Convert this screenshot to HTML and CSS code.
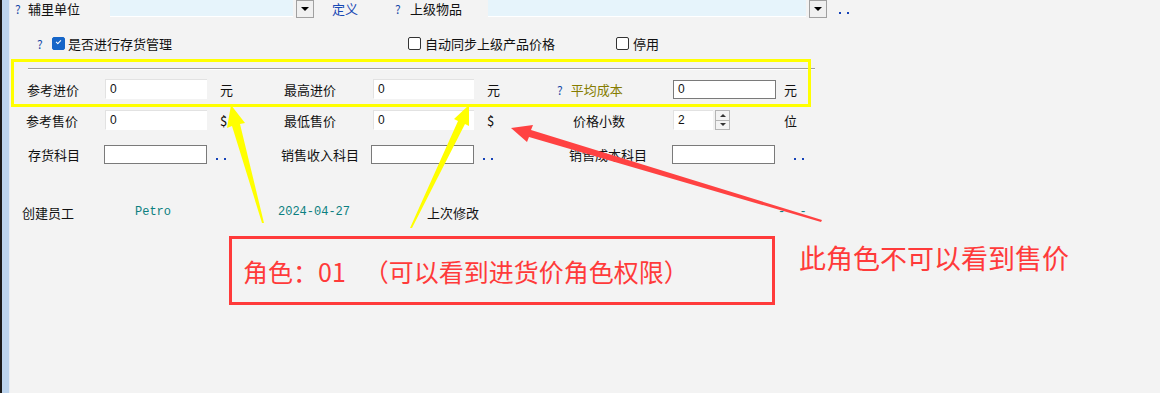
FILE: index.html
```html
<!DOCTYPE html>
<html lang="zh-CN">
<head>
  <meta charset="UTF-8">
  <title>物品资料</title>
  <link rel="stylesheet" href="styles.css">
</head>
<body>
  <div class="edge"></div>
  <div class="main">
    <div class="top-row">
      <span class="q w13 ml5">?</span>
      <span class="lbl w82">辅里单位</span>
      <span class="combo w183"></span>
      <span class="drop"></span>
      <span class="link ml18 w63">定义</span>
      <span class="q w15">?</span>
      <span class="lbl w78">上级物品</span>
      <span class="combo w318"></span>
      <span class="drop"></span>
      <span class="dots ml12"></span>
    </div>

    <div class="check-row">
      <span class="q w15 ml27">?</span>
      <span class="box on"></span>
      <span class="lbl w340">是否进行存货管理</span>
      <span class="box"></span>
      <span class="lbl w191">自动同步上级产品价格</span>
      <span class="box"></span>
      <span class="lbl">停用</span>
    </div>

    <div class="sep"></div>

    <div class="frow r1">
      <span class="lbl pl17">参考进价</span>
      <span class="field soft">0</span>
      <span class="unit">元</span>
      <span class="lbl">最高进价</span>
      <span class="field soft">0</span>
      <span class="unit">元</span>
      <span class="lbl"><span class="q q3">?</span><span class="olive">平均成本</span></span>
      <span class="field framed">0</span>
      <span class="unit u3">元</span>
    </div>

    <div class="frow r2">
      <span class="lbl pl16">参考售价</span>
      <span class="field soft">0</span>
      <span class="unit">$</span>
      <span class="lbl">最低售价</span>
      <span class="field soft">0</span>
      <span class="unit">$</span>
      <span class="lbl pl16">价格小数</span>
      <span class="spin"><span class="field soft small">2</span><span class="arrows"><i class="up"></i><i class="down"></i></span></span>
      <span class="unit u4">位</span>
    </div>

    <div class="frow r3">
      <span class="lbl pl18">存货科目</span>
      <span class="field framed ml-1"></span>
      <span class="unit"><span class="dots dl"></span></span>
      <span class="lbl ml-3">销售收入科目</span>
      <span class="field framed ml-2"></span>
      <span class="unit"><span class="dots dl"></span></span>
      <span class="lbl pl12">销售成本科目</span>
      <span class="field framed ml-1"></span>
      <span class="unit"><span class="dots dr"></span></span>
    </div>

    <div class="info-row">
      <span class="lbl ml12 w113">创建员工</span>
      <span class="mono w143">Petro</span>
      <span class="mono w149">2024-04-27</span>
      <span class="lbl w351">上次修改</span>
      <span class="mono">-&nbsp;&nbsp;-</span>
    </div>
  </div>

  <div class="mark-yellow"></div>
  <div class="mark-red"><span>角色：01</span><span class="gap">（可以看到进货价角色权限）</span></div>
  <div class="note">此角色不可以看到售价</div>

  <svg class="arrows-layer" width="1160" height="393" viewBox="0 0 1160 393">
    <polygon fill="#ffff00" points="231,105 245,123 240,124 264,223 262,223 232,126 227,128"/>
    <polygon fill="#ffff00" points="469,105 469,126 465,124 412,228 410,228 458,121 454,119"/>
    <polygon fill="#ff4242" points="511,128 533,125 531,130 822,220 821,222 529,137 527,142"/>
  </svg>
</body>
</html>
```

FILE: styles.css
```css
body {
  margin: 0;
  width: 1160px;
  height: 393px;
  overflow: hidden;
  position: relative;
  display: flex;
  background: #f3f3f3;
  color: #111;
  font-family: "Noto Sans CJK SC", "Liberation Sans", sans-serif;
  font-size: 13px;
}
.edge {
  width: 10px;
  box-sizing: border-box;
  border-left: 2px solid #1b1b1b;
  border-right: 1px solid #e6edf5;
  background: #bcd4ee;
}
.main {
  flex: 1;
}

/* helpers */
.ml5 { margin-left: 5px; }
.ml12 { margin-left: 12px; }
.ml18 { margin-left: 18px; }
.ml27 { margin-left: 27px; }
.ml-1 { margin-left: -1px; }
.ml-2 { margin-left: -2px; }
.ml-3 { margin-left: -3px; }
.pl12 { padding-left: 12px; }
.pl16 { padding-left: 16px; }
.pl17 { padding-left: 17px; }
.pl18 { padding-left: 18px; }
.w13 { width: 13px; }
.w15 { width: 15px; }
.w63 { width: 63px; }
.w78 { width: 78px; }
.w82 { width: 82px; }
.w113 { width: 113px; }
.w143 { width: 143px; }
.w149 { width: 149px; }
.w183 { width: 183px; }
.w191 { width: 191px; }
.w318 { width: 318px; }
.w340 { width: 340px; }
.w351 { width: 351px; }

.q { color: #1a4aa8; flex-shrink: 0; font-size: 12px; }
.lbl { flex-shrink: 0; white-space: nowrap; }
.link { color: #1748b4; }
.olive { color: #857c00; }

.top-row {
  display: flex;
  align-items: center;
  height: 17px;
}
.combo {
  height: 16px;
  align-self: flex-start;
  background: #e6f4fb;
  border-bottom: 1px solid #ffffff;
  flex-shrink: 0;
}
.drop {
  width: 16px;
  height: 16px;
  margin-left: 3px;
  align-self: flex-start;
  border: 1px solid #a0a0a0;
  background: #f0f0f0;
  display: flex;
  align-items: center;
  justify-content: center;
  flex-shrink: 0;
}
.drop::after {
  content: "";
  border-left: 4px solid transparent;
  border-right: 4px solid transparent;
  border-top: 4px solid #000;
}
.dots {
  width: 10px;
  height: 2px;
  background: linear-gradient(90deg, #1543b8 0 2px, transparent 2px 8px, #1543b8 8px 10px);
  margin-top: 8px;
}
.dl { display: inline-block; margin-left: -4px; margin-top: 12px; }
.dr { display: inline-block; margin-left: 5px; margin-top: 12px; }

.check-row {
  display: flex;
  align-items: center;
  height: 16px;
  margin-top: 18px;
}
.box {
  width: 11px;
  height: 11px;
  border: 1px solid #333;
  border-radius: 2px;
  background: #fff;
  margin-right: 4px;
  flex-shrink: 0;
  position: relative;
}
.box.on {
  background: #1565c8;
  border-color: #1565c8;
  margin-right: 3px;
}
.box.on::after {
  content: "";
  position: absolute;
  left: 3px;
  top: 2px;
  width: 4px;
  height: 2px;
  border-left: 1px solid #fff;
  border-bottom: 1px solid #fff;
  transform: rotate(-45deg);
}

.sep {
  margin: 17px 0 0 18px;
  width: 787px;
  height: 1px;
  background: #a0a0a0;
  border-bottom: 1px solid #fff;
}

.frow {
  display: grid;
  grid-template-columns: 95px 102px 77px 89px 101px 83px 116px 103px auto;
  align-items: center;
}
.r1 { margin-top: 9px; height: 20px; }
.r2 { margin-top: 11px; height: 20px; }
.r3 { margin-top: 15px; height: 19px; }
.field {
  height: 20px;
  box-sizing: border-box;
  background: #fff;
  padding-left: 4px;
  line-height: 19px;
  font-family: "Liberation Sans", sans-serif;
  font-size: 12px;
}
.field.soft {
  border-top: 1px solid #e2e2e2;
  border-left: 1px solid #e2e2e2;
  border-bottom: 1px solid #ffffff;
}
.field.framed {
  border: 1px solid #7a7a7a;
  height: 19px;
  line-height: 17px;
}
.r3 .field.framed { width: 103px; }
.unit { padding-left: 13px; }
.u3 { padding-left: 8px; }
.u4 { padding-left: 8px; }
.q3 { margin-right: 8px; }
.spin {
  display: flex;
  align-items: center;
  height: 20px;
}
.field.small { width: 40px; }
.arrows {
  width: 15px;
  height: 20px;
  margin-left: 2px;
  box-sizing: border-box;
  border: 1px solid #b5b5b5;
  display: flex;
  flex-direction: column;
}
.arrows i {
  flex: 1;
  display: flex;
  align-items: center;
  justify-content: center;
}
.arrows i.up { border-bottom: 1px solid #b5b5b5; }
.arrows i::after {
  content: "";
  border-left: 3px solid transparent;
  border-right: 3px solid transparent;
}
.arrows i.up::after { border-bottom: 3px solid #333; }
.arrows i.down::after { border-top: 3px solid #333; }

.info-row {
  display: flex;
  align-items: center;
  height: 16px;
  margin-top: 40px;
}
.mono {
  color: #0b7f80;
  font-family: "Liberation Mono", monospace;
  font-size: 12px;
  flex-shrink: 0;
}

/* annotations */
.mark-yellow {
  position: absolute;
  left: 11px;
  top: 59px;
  width: 794px;
  height: 42px;
  border: 3px solid #ffff00;
}
.mark-red {
  position: absolute;
  left: 229px;
  top: 236px;
  width: 529px;
  height: 63px;
  border: 3px solid #ff3a3a;
  display: flex;
  align-items: center;
  padding-left: 11px;
  color: #ff3a3a;
  font-size: 25px;
}
.mark-red .gap { margin-left: 18px; }
.note {
  position: absolute;
  left: 799px;
  top: 239px;
  color: #ff3a3a;
  font-size: 27px;
  line-height: 38px;
}
.arrows-layer {
  position: absolute;
  left: 0;
  top: 0;
  pointer-events: none;
}
```
